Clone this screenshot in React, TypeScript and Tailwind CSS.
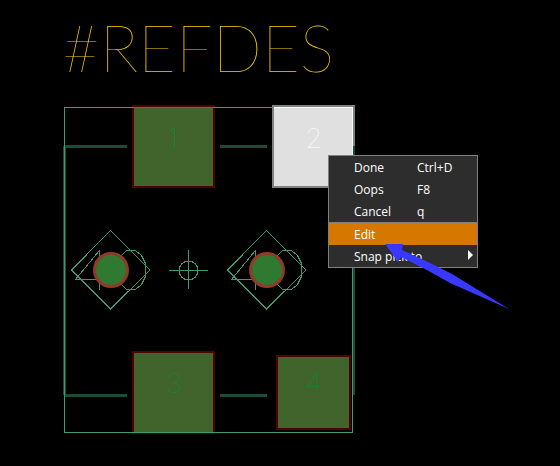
import React from "react";

type Item = { label: string; shortcut?: string; active?: boolean; submenu?: boolean };

const items: Item[] = [
  { label: "Done", shortcut: "Ctrl+D" },
  { label: "Oops", shortcut: "F8" },
  { label: "Cancel", shortcut: "q" },
  { label: "Edit", active: true },
  { label: "Snap pick to", submenu: true },
];

const bars = [
  { x: 64, y: 145, w: 63, h: 3 },
  { x: 220, y: 145, w: 47, h: 3 },
  { x: 64, y: 394, w: 63, h: 3 },
  { x: 220, y: 394, w: 47, h: 3 },
  { x: 63, y: 146, w: 3, h: 249 },
  { x: 352, y: 146, w: 3, h: 249 },
];

const pads = [
  { n: "1", x: 132, y: 105, size: 83, tx: 173, ty: 148 },
  { n: "2", x: 272, y: 105, size: 83, tx: 314, ty: 148, selected: true },
  { n: "3", x: 132, y: 351, size: 83, tx: 174, ty: 393 },
  { n: "4", x: 276, y: 355, size: 75, tx: 314, ty: 392 },
];

function Fiducial({ x }: { x: number }) {
  return (
    <g transform={`translate(${x} 270)`}>
      <g fill="none" stroke="#3f9a74" shapeRendering="crispEdges">
        <path d="M-.5-39.5 39 0-.5 39-39.5 0Z" />
        <path d="M-11.5-20V20M-12-19-35.5 9.500H-11" />
        <path d="M15.500-19.500H24.500L30.500-14.500 34.500-6.500V6.500L30.500 14.500 24.500 19.500H15.500L9.500 13.500 5.500 6.500V-6.500L9.500-13.500Z" />
      </g>
      <circle r="18" fill="#8f3b27" />
      <circle r="15" fill="#2f7931" />
    </g>
  );
}

function Board() {
  return (
    <svg className="block" width="560" height="466" viewBox="0 0 560 466" role="img" aria-label="Footprint drawing">
      {pads.map((p) => (
        <rect
          key={p.n}
          x={p.x + 1}
          y={p.y + 1}
          width={p.size - 2}
          height={p.size - 2}
          strokeWidth="2"
          fill={p.selected ? "#e0e0e0" : "#40642b"}
          stroke={p.selected ? "#808080" : "#500000"}
        />
      ))}
      {bars.map((b) => (
        <rect key={`${b.x}-${b.y}-${b.w}`} x={b.x} y={b.y} width={b.w} height={b.h} fill="#1f4a38" />
      ))}
      <rect x="64.500" y="107.500" width="288" height="325" fill="none" stroke="#3f9a74" />
      <rect x="274" y="107" width="79" height="79" fill="#e0e0e0" />
      <path d="M274 107.500H352.500V186" fill="none" stroke="#f0fff8" />
      <path d="M134 107.500H213" stroke="#2f8a3c" />
      <Fiducial x={111} />
      <Fiducial x={267} />
      <g fill="none" stroke="#3f9a74">
        <path d="M169 270.500H208M188.500 250V289" />
        <circle cx="188.500" cy="270.500" r="9.500" shapeRendering="crispEdges" />
      </g>
      <text x="62" y="72" fill="#ffd000" className="font-['Lato',sans-serif] text-[65px] font-thin">#REFDES</text>
      {pads.map((p) => (
        <text
          key={p.n}
          x={p.tx}
          y={p.ty}
          textAnchor="middle"
          fill={p.selected ? "#ffffff" : "#108a34"}
          className="font-['Inter',sans-serif] text-[27px] font-thin"
        >
          {p.n}
        </text>
      ))}
    </svg>
  );
}

function ContextMenu() {
  return (
    <div
      role="menu"
      className="absolute top-[155px] left-[328px] w-[150px] border border-[#808080] bg-[#2d2d2d] font-['Open_Sans','Noto_Sans',sans-serif] text-[12px] leading-5 text-white"
    >
      {items.map((it) => (
        <button
          key={it.label}
          type="button"
          role="menuitem"
          className={`grid w-full grid-cols-[63px_1fr_auto] items-center pt-[2px] pr-1 pl-[25px] text-left ${
            it.active ? "border-t border-[#808080] bg-[#d67800]" : ""
          }`}
        >
          <span className="whitespace-nowrap">{it.label}</span>
          <span>{it.shortcut}</span>
          {it.submenu && (
            <svg width="6" height="10" viewBox="0 0 6 10" fill="#fff" className="mb-1">
              <path d="M1 0 6 5 1 10Z" />
            </svg>
          )}
        </button>
      ))}
    </div>
  );
}

export default function App() {
  return (
    <main className="min-h-screen overflow-hidden bg-black">
      <div className="relative">
        <Board />
        <ContextMenu />
        <svg className="pointer-events-none absolute top-[243px] left-[384px]" width="126" height="68" viewBox="384 243 126 68">
          <path d="M385 244 403 244 402 250 426 261 452 274 509 309 450 283 425 269 401 257 398 262Z" fill="#3838ff" />
        </svg>
      </div>
    </main>
  );
}
